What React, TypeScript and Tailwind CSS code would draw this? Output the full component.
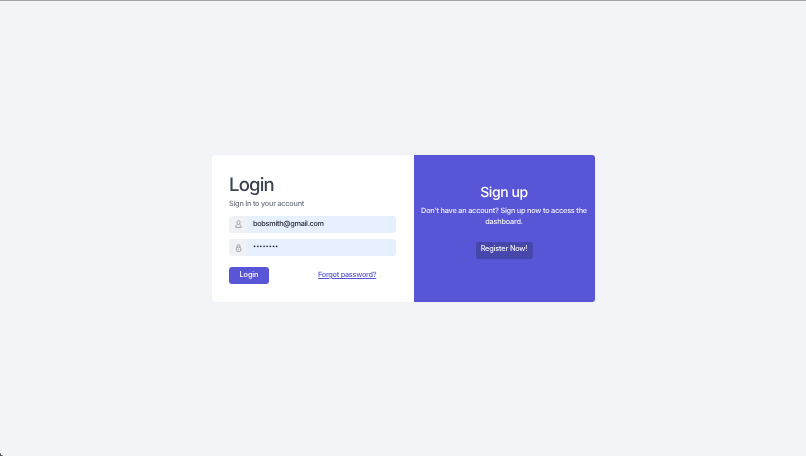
const font = { fontFamily: 'Inter, "Liberation Sans", sans-serif' }

function UserIcon() {
  return (
    <svg viewBox="0 0 8 9" className="w-[7px] h-[8px] text-[#7d828c]" fill="none" stroke="currentColor" strokeWidth="0.8">
      <path d="M4 0.6C5.1 0.6 5.7 1.4 5.7 2.6C5.7 3.9 5 5 4 5C3 5 2.3 3.9 2.3 2.6C2.3 1.4 2.9 0.6 4 0.6Z" />
      <path d="M2.7 4.7C2.6 5.6 1 5.9 0.8 7V8.4H7.2V7C7 5.9 5.4 5.6 5.3 4.7" />
    </svg>
  )
}

function LockIcon() {
  return (
    <svg viewBox="0 0 8 9" className="w-[7px] h-[8px] text-[#7d828c]" fill="none" stroke="currentColor" strokeWidth="0.8">
      <path d="M2.4 3.6V2.4C2.4 1.3 3 0.6 4 0.6C5 0.6 5.6 1.3 5.6 2.4V3.6" />
      <rect x="1.5" y="3.5" width="5" height="5" rx="1.5" />
      <path d="M4 5.3V6.6" />
    </svg>
  )
}

export default function App() {
  return (
    <div style={font} className="relative h-[456px] w-full overflow-hidden bg-[#f3f4f7] border-t border-[#a3a4a6] flex items-center justify-center [text-rendering:geometricPrecision] will-change-transform">
      <div className="flex w-[383px] h-[147px] mb-[1px] rounded-[3px] overflow-hidden shadow-[0_0_1px_rgba(0,0,0,0.12)]">
        <div className="w-[202px] bg-white pl-[17.5px] pr-[18px] pt-[20px]">
          <h1 className="text-[18.5px] leading-[20px] font-medium tracking-[-0.8px] text-[#3c4250]">Login</h1>
          <p className="mt-[4px] text-[7.3px] leading-[10px] tracking-[-0.23px] [font-weight:450] text-[#6f7480]">Sign In to your account</p>
          <div className="mt-[7px] flex h-[17px] rounded-[3px] overflow-hidden">
            <div className="w-[18px] bg-[#f0f1f4] flex items-center justify-center">
              <UserIcon />
            </div>
            <div className="flex-1 bg-[#e7f0fe] pl-[6px] pt-[0.5px] flex items-center text-[7.3px] tracking-[-0.28px] [font-weight:450] text-[#1f2430]">bobsmith@gmail.com</div>
          </div>
          <div className="mt-[6.5px] flex h-[17px] rounded-[3px] overflow-hidden">
            <div className="w-[18px] bg-[#f0f1f4] flex items-center justify-center">
              <LockIcon />
            </div>
            <div className="flex-1 bg-[#e7f0fe] pl-[6px] flex items-center text-[5.6px] text-[#1f2430]">••••••••</div>
          </div>
          <div className="mt-[11px] flex items-center">
            <button className="w-[40px] h-[17px] rounded-[3px] bg-[#5856d6] text-white text-[7.3px] tracking-[-0.1px] [font-weight:450]">Login</button>
            <a className="ml-[49px] text-[7.3px] tracking-[-0.26px] [font-weight:450] text-[#5856d6] underline">Forgot password?</a>
          </div>
        </div>
        <div className="w-[181px] bg-[#5856d6] text-white flex flex-col items-center pt-[30px] text-center">
          <h2 className="text-[14px] leading-[16px] font-medium tracking-[-0.4px]">Sign up</h2>
          <p className="mt-[4px] w-[170px] text-[7.3px] leading-[11px] tracking-[-0.2px] [font-weight:450] text-[#f0f0fb]">Don't have an account? Sign up now to access the dashboard.</p>
          <button className="mt-[15px] w-[57px] h-[17px] rounded-[3px] bg-[#4746ab] pb-[0.5px] text-[7.3px] tracking-[-0.16px] [font-weight:450] text-[#f0f0fb]">Register Now!</button>
        </div>
      </div>
      <div className="absolute left-0 bottom-0 w-[5px] h-[5px] bg-[radial-gradient(circle_at_100%_0%,transparent_70%,#555_75%)]" />
    </div>
  )
}
